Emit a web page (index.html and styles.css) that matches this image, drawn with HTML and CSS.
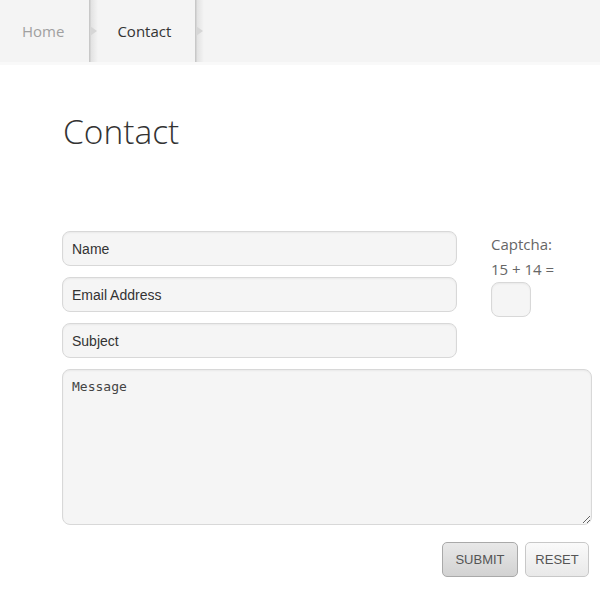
FILE: index.html
```html
<!DOCTYPE html>
<html lang="en">
<head>
  <meta charset="UTF-8" />
  <meta name="viewport" content="width=device-width, initial-scale=1.0"/>
  <title>Contact</title>
  <link rel="stylesheet" href="styles.css">
</head>
<body>
  <nav class="breadcrumb">
    <a href="#" class="crumb crumb-home">Home</a>
    <span class="crumb-sep"></span>
    <span class="crumb crumb-current">Contact</span>
    <span class="crumb-sep"></span>
  </nav>

  <div class="page">
    <h1 class="page-title">Contact</h1>

    <form class="contact-form">
      <div class="form-top">
        <div class="fields">
          <input type="text" class="field" placeholder="Name">
          <input type="email" class="field" placeholder="Email Address">
          <input type="text" class="field" placeholder="Subject">
        </div>
        <div class="captcha">
          <label for="captcha">Captcha:</label>
          <span class="captcha-sum">15 + 14 =</span>
          <input type="text" id="captcha" class="captcha-box">
        </div>
      </div>

      <textarea class="message" placeholder="Message"></textarea>

      <div class="actions">
        <button type="submit" class="btn btn-submit">SUBMIT</button>
        <button type="reset" class="btn btn-reset">RESET</button>
      </div>
    </form>
  </div>
</body>
</html>
```

FILE: styles.css
```css
body {
  margin: 0;
  font-family: 'Open Sans', sans-serif;
  background: #fff;
  color: #333;
}

.breadcrumb {
  display: flex;
  align-items: stretch;
  height: 62px;
  background: #f4f4f4;
  border-bottom: 3px solid #f9f9f9;
}

.crumb {
  display: flex;
  align-items: center;
  font-size: 15px;
  text-decoration: none;
}

.crumb-home {
  padding: 0 25px 0 22px;
  color: #a0a0a0;
}

.crumb-current {
  padding: 0 24px 0 19px;
  color: #333;
}

.crumb-sep {
  position: relative;
  width: 9px;
  background: linear-gradient(to right, #c8c8c8 0, #c8c8c8 1px, #e2e2e2 2px, #f4f4f4 9px);
}

.crumb-sep::after {
  content: '';
  position: absolute;
  left: 1px;
  top: 26px;
  border-left: 7px solid #d6d6d6;
  border-top: 5px solid transparent;
  border-bottom: 5px solid transparent;
}

.page {
  padding: 0 8px 0 62px;
}

.page-title {
  margin: 43px 0 0 1px;
  font-size: 33.5px;
  font-weight: 300;
  color: #333;
}

.contact-form {
  margin-top: 77px;
  width: 530px;
}

.form-top {
  display: flex;
  gap: 34px;
}

.fields {
  display: flex;
  flex-direction: column;
  gap: 11px;
  width: 395px;
}

.field,
.captcha-box,
.message {
  box-sizing: border-box;
  background: #f5f5f5;
  border: 1px solid #d8d8d8;
  border-radius: 8px;
  box-shadow: inset 0 1px 2px rgba(0, 0, 0, 0.05);
  color: #333;
}

.field {
  height: 35px;
  padding: 0 9px;
  font-family: 'Liberation Sans', Arial, sans-serif;
  font-size: 14px;
}

.field::placeholder {
  color: #333;
}

.captcha {
  display: flex;
  flex-direction: column;
  align-items: flex-start;
  padding-top: 1px;
  font-size: 15px;
  line-height: 25px;
  color: #666;
}

.captcha-box {
  width: 40px;
  height: 35px;
}

.message {
  display: block;
  width: 530px;
  height: 156px;
  margin-top: 11px;
  padding: 9px 9px;
  font-family: 'DejaVu Sans Mono', monospace;
  font-size: 13px;
}

.message::placeholder {
  color: #444;
}

.actions {
  display: flex;
  justify-content: flex-end;
  gap: 7px;
  margin-top: 17px;
  padding-right: 3px;
}

.btn {
  height: 35px;
  border-radius: 5px;
  font-family: 'Liberation Sans', Arial, sans-serif;
  font-size: 13px;
  color: #555;
  cursor: pointer;
}

.btn-submit {
  width: 76px;
  background: linear-gradient(#e8e8e8, #d2d2d2);
  border: 1px solid #a9a9a9;
}

.btn-reset {
  width: 64px;
  background: linear-gradient(#fafafa, #e9e9e9);
  border: 1px solid #c8c8c8;
}
```
